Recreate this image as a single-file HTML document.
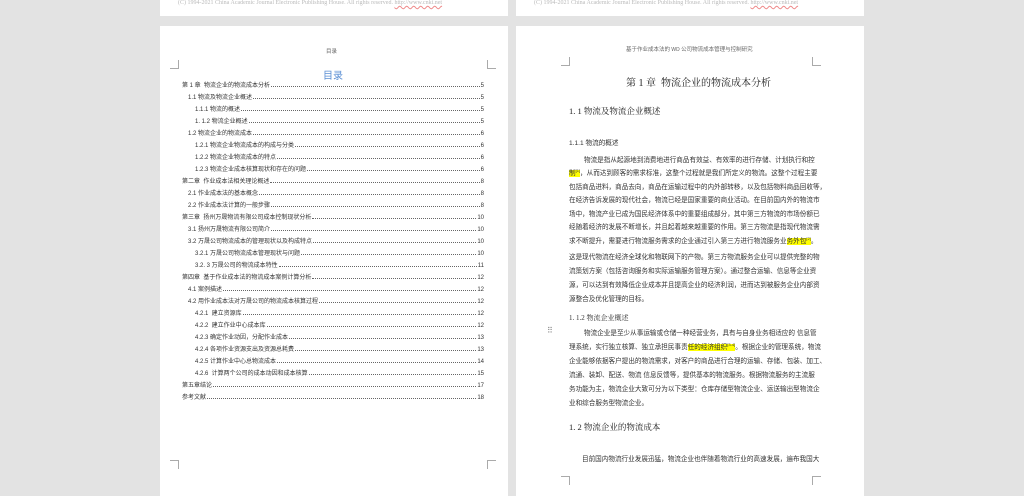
<!DOCTYPE html>
<html><head><meta charset="utf-8"><style>
body{margin:0;width:1024px;height:483px;background:#e3e3e3;position:relative;overflow:hidden;font-family:"Liberation Serif","Noto Serif CJK SC","Noto Sans CJK SC",serif;color:#222}
.pg{position:absolute;background:#fff}
.a{position:absolute;white-space:nowrap}
.toc{position:absolute;font-size:6px;display:flex;align-items:flex-end;height:9px;font-family:"Liberation Sans","Noto Sans CJK SC",sans-serif;color:#333}
.toc .d{flex:1;border-bottom:1px dotted #666;margin:0 1px 2px}
.ln{position:absolute;left:569px;width:243px;font-size:6.6px;text-align:justify;text-align-last:justify;white-space:nowrap;font-family:"Liberation Sans","Noto Sans CJK SC",sans-serif;color:#333}
.hl{background:#ffff00}
.cm{position:absolute;width:8px;height:8px;border-color:#aaa;border-style:solid;border-width:0}
</style></head><body>
<div class="pg" style="left:160px;top:0;width:348px;height:16px"></div>
<div class="pg" style="left:516px;top:0;width:348px;height:16px"></div>
<div class="a" style="left:178px;top:0;font-size:6px;color:#bbb">(C) 1994-2021 China Academic Journal Electronic Publishing House. All rights reserved. <span style="text-decoration:underline wavy #e88">http://www.cnki.net</span></div>
<div class="a" style="left:534px;top:0;font-size:6px;color:#bbb">(C) 1994-2021 China Academic Journal Electronic Publishing House. All rights reserved. <span style="text-decoration:underline wavy #e88">http://www.cnki.net</span></div>

<div class="pg" style="left:160px;top:26px;width:348px;height:470px"></div>
<div class="pg" style="left:516px;top:26px;width:348px;height:470px"></div>

<div class="cm" style="left:170px;top:60px;border-right-width:1px;border-bottom-width:1px"></div>
<div class="cm" style="left:487px;top:60px;border-left-width:1px;border-bottom-width:1px"></div>
<div class="cm" style="left:166px;top:460px;border-left-width:1px;border-top-width:1px;left:487px"></div>
<div class="cm" style="left:170px;top:460px;border-right-width:1px;border-top-width:1px"></div>
<div class="cm" style="left:561px;top:57px;border-right-width:1px;border-bottom-width:1px"></div>
<div class="cm" style="left:812px;top:57px;border-left-width:1px;border-bottom-width:1px"></div>
<div class="cm" style="left:561px;top:476px;border-right-width:1px;border-top-width:1px"></div>
<div class="cm" style="left:812px;top:476px;border-left-width:1px;border-top-width:1px"></div>

<div class="a" style="left:326px;top:47px;font-size:5.5px;color:#666;font-family:'Noto Sans CJK SC',sans-serif">目录</div>
<div class="a" style="left:323px;top:67px;font-size:10px;color:#5b8fd4;font-family:'Noto Sans CJK SC',sans-serif">目录</div>

<div class="toc" style="left:182px;width:302px;top:80px">第 1 章&nbsp; 物流企业的物流成本分析<span class="d"></span>5</div>
<div class="toc" style="left:188px;width:296px;top:92px">1.1 物流及物流企业概述<span class="d"></span>5</div>
<div class="toc" style="left:195px;width:289px;top:104px">1.1.1 物流的概述<span class="d"></span>5</div>
<div class="toc" style="left:195px;width:289px;top:116px">1. 1.2 物流企业概述<span class="d"></span>5</div>
<div class="toc" style="left:188px;width:296px;top:128px">1.2 物流企业的物流成本<span class="d"></span>6</div>
<div class="toc" style="left:195px;width:289px;top:140px">1.2.1 物流企业物流成本的构成与分类<span class="d"></span>6</div>
<div class="toc" style="left:195px;width:289px;top:152px">1.2.2 物流企业物流成本的特点<span class="d"></span>6</div>
<div class="toc" style="left:195px;width:289px;top:164px">1.2.3 物流企业成本核算现状和存在的问题<span class="d"></span>6</div>
<div class="toc" style="left:182px;width:302px;top:176px">第二章&nbsp; 作业成本法相关理论概述<span class="d"></span>8</div>
<div class="toc" style="left:188px;width:296px;top:188px">2.1 作业成本法的基本概念<span class="d"></span>8</div>
<div class="toc" style="left:188px;width:296px;top:200px">2.2 作业成本法计算的一般步骤<span class="d"></span>8</div>
<div class="toc" style="left:182px;width:302px;top:212px">第三章&nbsp; 扬州万晟物流有限公司成本控制现状分析<span class="d"></span>10</div>
<div class="toc" style="left:188px;width:296px;top:224px">3.1 扬州万晟物流有限公司简介<span class="d"></span>10</div>
<div class="toc" style="left:188px;width:296px;top:236px">3.2 万晟公司物流成本的管理现状以及构成特点<span class="d"></span>10</div>
<div class="toc" style="left:195px;width:289px;top:248px">3.2.1 万晟公司物流成本管理现状与问题<span class="d"></span>10</div>
<div class="toc" style="left:195px;width:289px;top:260px">3.2. 3 万晟公司的物流成本特性<span class="d"></span>11</div>
<div class="toc" style="left:182px;width:302px;top:272px">第四章&nbsp; 基于作业成本法的物流成本案例计算分析<span class="d"></span>12</div>
<div class="toc" style="left:188px;width:296px;top:284px">4.1 案例描述<span class="d"></span>12</div>
<div class="toc" style="left:188px;width:296px;top:296px">4.2 用作业成本法对万晟公司的物流成本核算过程<span class="d"></span>12</div>
<div class="toc" style="left:195px;width:289px;top:308px">4.2.1&nbsp; 建立资源库<span class="d"></span>12</div>
<div class="toc" style="left:195px;width:289px;top:320px">4.2.2&nbsp; 建立作业中心成本库<span class="d"></span>12</div>
<div class="toc" style="left:195px;width:289px;top:332px">4.2.3 确定作业动因，分配作业成本<span class="d"></span>13</div>
<div class="toc" style="left:195px;width:289px;top:344px">4.2.4 各项作业资源支出及资源总耗费<span class="d"></span>13</div>
<div class="toc" style="left:195px;width:289px;top:356px">4.2.5 计算作业中心总物流成本<span class="d"></span>14</div>
<div class="toc" style="left:195px;width:289px;top:368px">4.2.6&nbsp; 计算两个公司的成本动因和成本核算<span class="d"></span>15</div>
<div class="toc" style="left:182px;width:302px;top:380px">第五章结论<span class="d"></span>17</div>
<div class="toc" style="left:182px;width:302px;top:392px">参考文献<span class="d"></span>18</div>

<div class="a" style="left:626px;top:45px;font-size:5.5px;color:#666;font-family:'Noto Sans CJK SC',sans-serif">基于作业成本法的 WD 公司物流成本管理与控制研究</div>
<div class="a" style="left:626px;top:74px;font-size:10px;color:#222">第 1 章&nbsp; 物流企业的物流成本分析</div>
<div class="a" style="left:569px;top:105px;font-size:8.5px;color:#222">1. 1 物流及物流企业概述</div>
<div class="a" style="left:569px;top:137px;font-size:6.6px;color:#333;font-family:'Liberation Sans','Noto Sans CJK SC',sans-serif">1.1.1 物流的概述</div>

<div class="ln" style="top:154px;left:584px;width:228px">物流是指从起源地到消费地进行商品有效益、有效率的进行存储、计划执行和控</div>
<div class="ln" style="top:167px"><span class="hl">制<sup style="font-size:4px">[1]</sup></span>，从而达到顾客的需求标准，这整个过程就是我们所定义的物流。这整个过程主要</div>
<div class="ln" style="top:181px">包括商品进料，商品去向，商品在运输过程中的内外部转移，以及包括物料商品回收等，</div>
<div class="ln" style="top:194px">在经济告诉发展的现代社会，物流已经是国家重要的商业活动。在目前国内外的物流市</div>
<div class="ln" style="top:208px">场中，物流产业已成为国民经济体系中的重要组成部分，其中第三方物流的市场份额已</div>
<div class="ln" style="top:221px">经随着经济的发展不断增长，并且起着越来越重要的作用。第三方物流是指现代物流需</div>
<div class="ln" style="top:235px;width:235px">求不断提升，需要进行物流服务需求的企业通过引入第三方进行物流服务业<span class="hl">务外包<sup style="font-size:4px">[2]</sup></span>。</div>
<div class="ln" style="top:251px">这是现代物流在经济全球化和物联网下的产物。第三方物流服务企业可以提供完整的物</div>
<div class="ln" style="top:265px">流策划方案（包括咨询服务和实际运输服务管理方案）。通过整合运输、信息等企业资</div>
<div class="ln" style="top:279px">源，可以达到有效降低企业成本并且提高企业的经济利润，进而达到被服务企业内部资</div>
<div class="ln" style="top:293px;text-align-last:left">源整合及优化管理的目标。</div>
<div class="a" style="left:569px;top:313px;font-size:7px;color:#333">1. 1.2 物流企业概述</div>
<div class="a" style="left:547px;top:326px;font-size:8px;color:#888;letter-spacing:-1px">⠿</div>
<div class="ln" style="top:327px;left:584px;width:228px">物流企业是至少从事运输或仓储一种经营业务，具有与自身业务相适应的 信息管</div>
<div class="ln" style="top:341px">理系统，实行独立核算、独立承担民事责<span class="hl">任的经济组织<sup style="font-size:4px">[3-4]</sup></span>。根据企业的管理系统，物流</div>
<div class="ln" style="top:355px">企业能够依据客户提出的物流需求，对客户的商品进行合理的运输、存储、包装、加工、</div>
<div class="ln" style="top:369px">流通、装卸、配送、物流 信息反馈等，提供基本的物流服务。根据物流服务的主流服</div>
<div class="ln" style="top:383px">务功能为主，物流企业大致可分为以下类型：仓库存储型物流企业、运送输出型物流企</div>
<div class="ln" style="top:397px;text-align-last:left">业和综合服务型物流企业。</div>
<div class="a" style="left:569px;top:421px;font-size:8.5px;color:#222">1. 2 物流企业的物流成本</div>
<div class="ln" style="top:453px;left:582px;width:230px">目前国内物流行业发展迅猛，物流企业也伴随着物流行业的高速发展，遍布我国大</div>
</body></html>
